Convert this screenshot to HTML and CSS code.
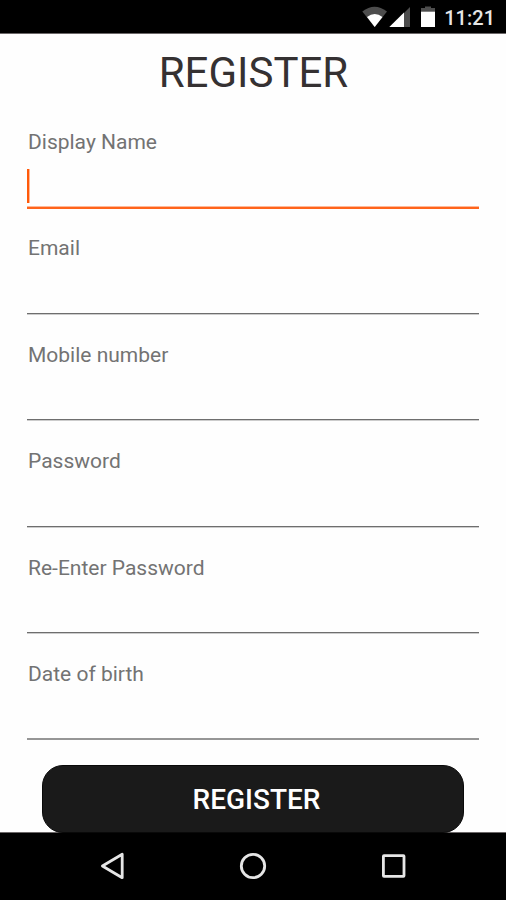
FILE: index.html
```html
<!DOCTYPE html>
<html lang="en">
<head>
<meta charset="utf-8">
<title>Register</title>
<link rel="stylesheet" href="styles.css">
</head>
<body>
<div class="screen">
  <header class="status">
    <svg class="status-icons" width="76" height="33" viewBox="0 0 76 33">
      <path fill="#4d4d4d" d="M0.3 11.5Q12.5 2 25 11.5L12.7 27z"/>
      <path fill="#fff" d="M5 17Q12.7 11.2 20.5 17L12.7 27z"/>
      <path fill="#4d4d4d" d="M48 7V27H42V13z"/>
      <path fill="#fff" d="M27.3 27L42 12.5V27z"/>
      <path fill="#4d4d4d" d="M59 12V8h4V6.5h6V8h4v4z"/>
      <path fill="#fff" d="M59 11.7h14V27H59z"/>
    </svg>
    <span class="clock">11:21</span>
  </header>
  <main class="form">
    <h1 class="title">REGISTER</h1>
    <div class="field focused"><span class="label">Display Name</span><div class="input"><i class="caret"></i></div></div>
    <div class="field"><span class="label">Email</span><div class="input"></div></div>
    <div class="field"><span class="label">Mobile number</span><div class="input"></div></div>
    <div class="field"><span class="label">Password</span><div class="input"></div></div>
    <div class="field"><span class="label">Re-Enter Password</span><div class="input"></div></div>
    <div class="field last"><span class="label">Date of birth</span><div class="input"></div></div>
    <button class="submit" type="button">REGISTER</button>
  </main>
  <nav class="nav">
    <svg width="28" height="30" viewBox="0 0 28 30"><path d="M23.2 3.3V26.7L3.4 15z"/></svg>
    <svg width="28" height="30" viewBox="0 0 28 30"><circle cx="14" cy="15" r="11.7"/></svg>
    <svg width="28" height="30" viewBox="0 0 28 30"><rect x="3.4" y="4.7" width="20.6" height="20.6" rx=".6"/></svg>
  </nav>
</div>
</body>
</html>
```

FILE: styles.css
```css
* { box-sizing: border-box; }
body { margin: 0; font-family: Roboto, "Liberation Sans", sans-serif; }
.screen {
  display: flex;
  flex-direction: column;
  width: 506px;
  height: 900px;
  overflow: hidden;
  background: #fefefe;
}
.status {
  display: flex;
  justify-content: flex-end;
  height: 34px;
  padding-right: 11px;
  background: #000;
  border-bottom: 1px solid #6b6768;
  color: #e6e6e6;
}
.status-icons { margin-right: 6px; }
.clock {
  font-size: 20px;
  font-weight: 500;
  line-height: 37px;
  white-space: nowrap;
}
.form {
  display: flex;
  flex-direction: column;
  height: 798px;
}
.title {
  margin: 0;
  height: 69px;
  padding-left: 1px;
  font-size: 42px;
  font-weight: 400;
  line-height: 78px;
  text-align: center;
  color: #353132;
}
.field {
  display: flex;
  flex-direction: column;
  flex: none;
  height: 106.4px;
  padding: 26px 27px 0;
}
.label {
  height: 26px;
  padding-left: 1px;
  font-size: 21px;
  line-height: 26px;
  color: #737373;
}
.input {
  position: relative;
  height: 52.5px;
  border-bottom: 1px solid #6e6e6e;
  box-shadow: 0 1px #ccc;
}
.focused .input {
  height: 54px;
  border-bottom: 2px solid #ff641b;
  box-shadow: 0 -1px #ffb898 inset;
}
.last .input {
  height: 53px;
  border-bottom: 2px solid #969696;
  box-shadow: none;
}
.caret {
  position: absolute;
  left: 0;
  bottom: 4px;
  width: 2px;
  height: 34px;
  background: #ff5a0a;
  box-shadow: 1px 0 #ffb898;
}
.submit {
  flex: none;
  z-index: 1;
  width: 422px;
  height: 68px;
  margin: 23.6px 0 0 42px;
  padding: 2px 0 0 7px;
  border: 1px solid #090909;
  border-radius: 21px;
  background: #1a1a1a;
  color: #fff;
  font: 500 28px/64px Roboto, "Liberation Sans", sans-serif;
}
.nav {
  display: flex;
  justify-content: center;
  align-items: center;
  gap: 112.5px;
  height: 68px;
  padding-bottom: 1px;
  background: #000;
  border-top: 1px solid #6b6768;
}
.nav svg { fill: none; stroke: #e6e6e6; stroke-width: 2.8; stroke-linejoin: round; }
```
